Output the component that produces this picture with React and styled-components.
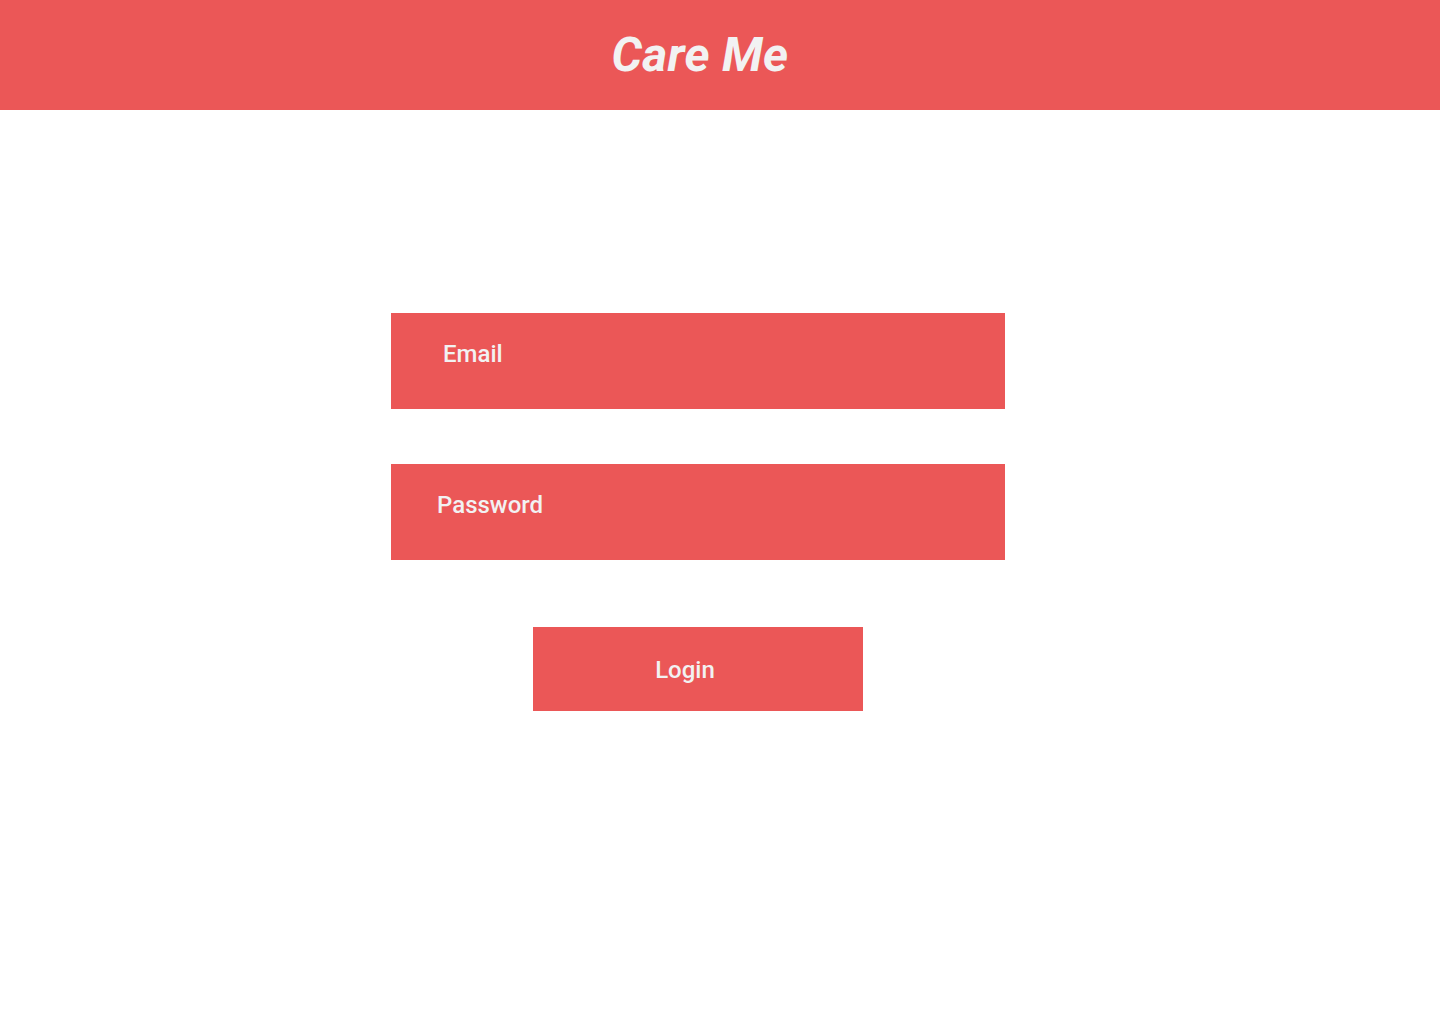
import React, { useState } from "react";
import styled, { createGlobalStyle } from "styled-components";

const GlobalStyle = createGlobalStyle`
  body {
    margin: 0;
    background: #ffffff;
    font-family: Roboto, "Liberation Sans", sans-serif;
  }
`;

const Header = styled.header`
  height: 110px;
  background: #eb5757;
  display: flex;
  align-items: center;
  justify-content: center;
  padding-right: 40px;
`;

const Title = styled.h1`
  margin: 0 0 2px;
  font-size: 48px;
  font-weight: 700;
  font-style: italic;
  color: #f2f2f2;
  letter-spacing: 0.3px;
`;

const Main = styled.main`
  display: flex;
  justify-content: center;
  padding: 203px 44px 0 0;
`;

const LoginForm = styled.form`
  width: 614px;
  display: flex;
  flex-direction: column;
  align-items: center;
`;

const Field = styled.input`
  width: 100%;
  height: 96px;
  box-sizing: border-box;
  border: none;
  outline: none;
  background: #eb5757;
  color: #f2f2f2;
  font-family: inherit;
  font-size: 24px;
  font-weight: 500;
  padding: 0 20px 14px ${(props) => props.$indent}px;
  margin-bottom: ${(props) => props.$gap}px;

  &::placeholder {
    color: #f2f2f2;
    opacity: 1;
  }
`;

const LoginButton = styled.button`
  width: 330px;
  height: 84px;
  border: none;
  background: #eb5757;
  color: #f2f2f2;
  font-family: inherit;
  font-size: 24px;
  font-weight: 500;
  cursor: pointer;
  padding: 2px 26px 0 0;
`;

export default function App() {
  const [email, setEmail] = useState("");
  const [password, setPassword] = useState("");

  const handleSubmit = (e) => {
    e.preventDefault();
  };

  return (
    <>
      <GlobalStyle />
      <Header>
        <Title>Care Me</Title>
      </Header>
      <Main>
        <LoginForm onSubmit={handleSubmit}>
          <Field
            type="email"
            placeholder="Email"
            value={email}
            onChange={(e) => setEmail(e.target.value)}
            $indent={52}
            $gap={55}
          />
          <Field
            type="password"
            placeholder="Password"
            value={password}
            onChange={(e) => setPassword(e.target.value)}
            $indent={46}
            $gap={67}
          />
          <LoginButton type="submit">Login</LoginButton>
        </LoginForm>
      </Main>
    </>
  );
}
